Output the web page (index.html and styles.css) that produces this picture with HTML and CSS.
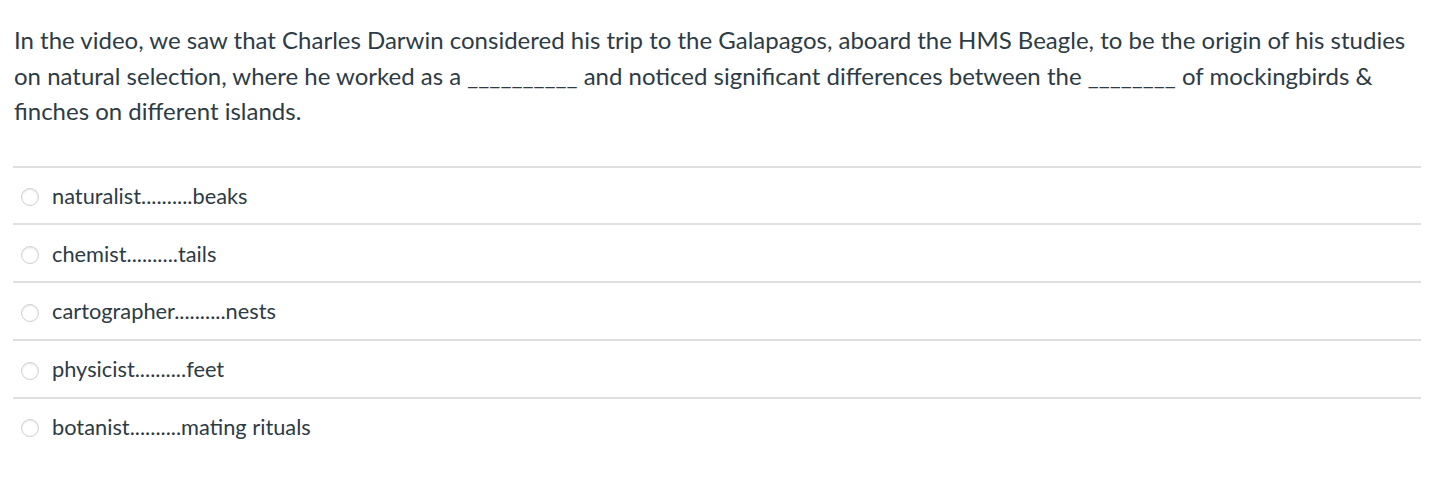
FILE: index.html
```html
<!DOCTYPE html>
<html>
<head>
<meta charset="utf-8">
<link rel="stylesheet" href="styles.css">
</head>
<body>
<div class="quiz">
  <div class="question">In the video, we saw that Charles Darwin considered his trip to the Galapagos, aboard the HMS Beagle, to be the origin of his studies on natural selection, where he worked as a __________ and noticed significant differences between the ________ of mockingbirds &amp; finches on different islands.</div>
  <div class="answers">
    <label class="answer"><span class="radio"></span><span class="text">naturalist..........beaks</span></label>
    <label class="answer"><span class="radio"></span><span class="text">chemist..........tails</span></label>
    <label class="answer"><span class="radio"></span><span class="text">cartographer..........nests</span></label>
    <label class="answer"><span class="radio"></span><span class="text">physicist..........feet</span></label>
    <label class="answer"><span class="radio"></span><span class="text">botanist..........mating rituals</span></label>
  </div>
</div>
</body>
</html>
```

FILE: styles.css
```css
html, body {
  margin: 0;
  padding: 0;
  background: #fff;
}
body {
  font-family: Lato, "Open Sans", sans-serif;
  color: #2d3b45;
}
.quiz {
  padding: 22px 23px 0 13px;
}
.question {
  font-size: 24px;
  line-height: 35.5px;
  padding-left: 1px;
  padding-bottom: 37px;
}
.answers {
  display: flex;
  flex-direction: column;
}
.answer {
  display: flex;
  align-items: center;
  gap: 13px;
  height: 55.75px;
  border-top: 2px solid #e0e0e0;
  padding-left: 8px;
  font-size: 21.8px;
}
.radio {
  width: 16px;
  height: 16px;
  border-radius: 50%;
  border: 1px solid #d0d0d0;
  background: #fff;
  box-shadow: inset 0 1px 2px rgba(0,0,0,0.1);
  flex: none;
  margin-top: 4px;
}
```
